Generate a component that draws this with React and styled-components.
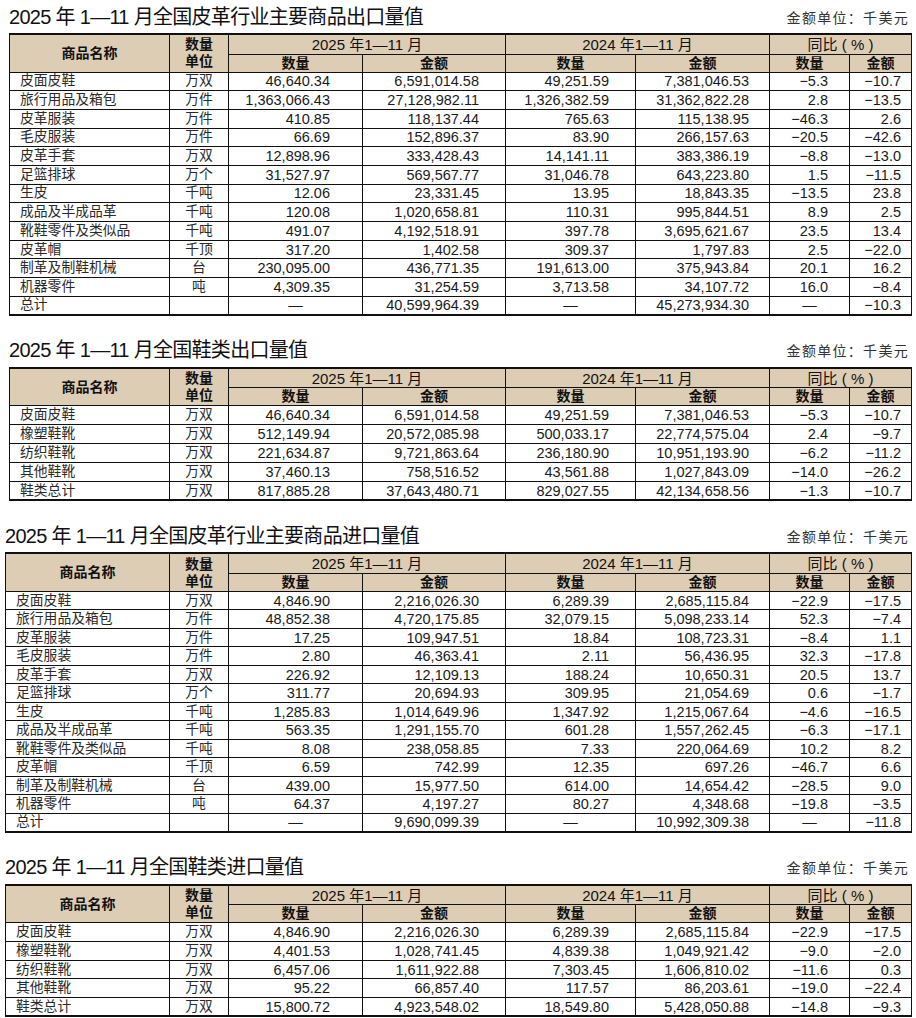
import React from "react";
import styled, { createGlobalStyle } from "styled-components";

const GlobalStyle = createGlobalStyle`
  html, body {
    margin: 0;
    padding: 0;
    background: #fff;
  }

  body {
    font-family: "Liberation Sans", "Noto Sans CJK SC", sans-serif;
    color: #1a1a1a;
  }
`

const Page = styled.div`
  width: 916px;
  display: flex;
  flex-direction: column;
  gap: 18px;
`

const Section = styled.section`
  display: flex;
  flex-direction: column;
  padding: 0 5px 0 ${({ $left }) => $left}px;
`

const TitleBar = styled.div`
  height: 33px;
  display: flex;
  align-items: center;
  justify-content: space-between;
`

const Title = styled.h2`
  margin: 0;
  font-size: 20px;
  font-weight: 400;
  line-height: 1;
  letter-spacing: -0.7px;
  color: #111;
`

const UnitNote = styled.span`
  font-family: "Noto Sans CJK SC", sans-serif;
  font-size: 14px;
  letter-spacing: 1.3px;
  color: #333;
  margin-right: 2px;
`

const Table = styled.table`
  width: 100%;
  table-layout: fixed;
  border-collapse: collapse;
  border-top: 2px solid #111;
  border-bottom: 2px solid #111;
`

const HeadRow = styled.tr`
  height: ${({ $h }) => $h}px;
`

const HeadCell = styled.th`
  background: #ddcdb4;
  border: 1px solid #111;
  padding: 0;
  text-align: center;
  font-size: ${({ $bold }) => ($bold ? 14 : 15)}px;
  font-weight: ${({ $bold }) => ($bold ? 700 : 400)};
  line-height: 17px;
  color: #111;
  white-space: nowrap;
`

const BodyRow = styled.tr`
  height: ${({ $h }) => $h}px;
`

const Cell = styled.td`
  border: 1px solid #111;
  padding: 0 ${({ $pr }) => $pr || 0}px 0 ${({ $pl }) => $pl || 0}px;
  text-align: ${({ $align }) => $align};
  font-size: ${({ $cjk }) => ($cjk ? 13.8 : 14.5)}px;
  line-height: 16px;
  color: ${({ $cjk }) => ($cjk ? "#2a2a2a" : "#1a1a1a")};
  white-space: nowrap;
`

// right padding of each number column, so figures end where the print has them
const numPad = [32, 26, 26, 20, 21, 10]

const exportGoods = [
  ["皮面皮鞋", "万双", "46,640.34", "6,591,014.58", "49,251.59", "7,381,046.53", "−5.3", "−10.7"],
  ["旅行用品及箱包", "万件", "1,363,066.43", "27,128,982.11", "1,326,382.59", "31,362,822.28", "2.8", "−13.5"],
  ["皮革服装", "万件", "410.85", "118,137.44", "765.63", "115,138.95", "−46.3", "2.6"],
  ["毛皮服装", "万件", "66.69", "152,896.37", "83.90", "266,157.63", "−20.5", "−42.6"],
  ["皮革手套", "万双", "12,898.96", "333,428.43", "14,141.11", "383,386.19", "−8.8", "−13.0"],
  ["足篮排球", "万个", "31,527.97", "569,567.77", "31,046.78", "643,223.80", "1.5", "−11.5"],
  ["生皮", "千吨", "12.06", "23,331.45", "13.95", "18,843.35", "−13.5", "23.8"],
  ["成品及半成品革", "千吨", "120.08", "1,020,658.81", "110.31", "995,844.51", "8.9", "2.5"],
  ["靴鞋零件及类似品", "千吨", "491.07", "4,192,518.91", "397.78", "3,695,621.67", "23.5", "13.4"],
  ["皮革帽", "千顶", "317.20", "1,402.58", "309.37", "1,797.83", "2.5", "−22.0"],
  ["制革及制鞋机械", "台", "230,095.00", "436,771.35", "191,613.00", "375,943.84", "20.1", "16.2"],
  ["机器零件", "吨", "4,309.35", "31,254.59", "3,713.58", "34,107.72", "16.0", "−8.4"],
  ["总计", "", "—", "40,599,964.39", "—", "45,273,934.30", "—", "−10.3"],
]

const exportShoes = [
  ["皮面皮鞋", "万双", "46,640.34", "6,591,014.58", "49,251.59", "7,381,046.53", "−5.3", "−10.7"],
  ["橡塑鞋靴", "万双", "512,149.94", "20,572,085.98", "500,033.17", "22,774,575.04", "2.4", "−9.7"],
  ["纺织鞋靴", "万双", "221,634.87", "9,721,863.64", "236,180.90", "10,951,193.90", "−6.2", "−11.2"],
  ["其他鞋靴", "万双", "37,460.13", "758,516.52", "43,561.88", "1,027,843.09", "−14.0", "−26.2"],
  ["鞋类总计", "万双", "817,885.28", "37,643,480.71", "829,027.55", "42,134,658.56", "−1.3", "−10.7"],
]

const importGoods = [
  ["皮面皮鞋", "万双", "4,846.90", "2,216,026.30", "6,289.39", "2,685,115.84", "−22.9", "−17.5"],
  ["旅行用品及箱包", "万件", "48,852.38", "4,720,175.85", "32,079.15", "5,098,233.14", "52.3", "−7.4"],
  ["皮革服装", "万件", "17.25", "109,947.51", "18.84", "108,723.31", "−8.4", "1.1"],
  ["毛皮服装", "万件", "2.80", "46,363.41", "2.11", "56,436.95", "32.3", "−17.8"],
  ["皮革手套", "万双", "226.92", "12,109.13", "188.24", "10,650.31", "20.5", "13.7"],
  ["足篮排球", "万个", "311.77", "20,694.93", "309.95", "21,054.69", "0.6", "−1.7"],
  ["生皮", "千吨", "1,285.83", "1,014,649.96", "1,347.92", "1,215,067.64", "−4.6", "−16.5"],
  ["成品及半成品革", "千吨", "563.35", "1,291,155.70", "601.28", "1,557,262.45", "−6.3", "−17.1"],
  ["靴鞋零件及类似品", "千吨", "8.08", "238,058.85", "7.33", "220,064.69", "10.2", "8.2"],
  ["皮革帽", "千顶", "6.59", "742.99", "12.35", "697.26", "−46.7", "6.6"],
  ["制革及制鞋机械", "台", "439.00", "15,977.50", "614.00", "14,654.42", "−28.5", "9.0"],
  ["机器零件", "吨", "64.37", "4,197.27", "80.27", "4,348.68", "−19.8", "−3.5"],
  ["总计", "", "—", "9,690,099.39", "—", "10,992,309.38", "—", "−11.8"],
]

const importShoes = [
  ["皮面皮鞋", "万双", "4,846.90", "2,216,026.30", "6,289.39", "2,685,115.84", "−22.9", "−17.5"],
  ["橡塑鞋靴", "万双", "4,401.53", "1,028,741.45", "4,839.38", "1,049,921.42", "−9.0", "−2.0"],
  ["纺织鞋靴", "万双", "6,457.06", "1,611,922.88", "7,303.45", "1,606,810.02", "−11.6", "0.3"],
  ["其他鞋靴", "万双", "95.22", "66,857.40", "117.57", "86,203.61", "−19.0", "−22.4"],
  ["鞋类总计", "万双", "15,800.72", "4,923,548.02", "18,549.80", "5,428,050.88", "−14.8", "−9.3"],
]

const tables = [
  { title: "2025 年 1—11 月全国皮革行业主要商品出口量值", rows: exportGoods, left: 9, rowH: 18.7 },
  { title: "2025 年 1—11 月全国鞋类出口量值", rows: exportShoes, left: 9, rowH: 18.9 },
  { title: "2025 年 1—11 月全国皮革行业主要商品进口量值", rows: importGoods, left: 5, rowH: 18.5 },
  { title: "2025 年 1—11 月全国鞋类进口量值", rows: importShoes, left: 5, rowH: 18.7 },
]

const TradeTable = ({ title, rows, left, rowH }) => (
  <Section $left={left}>
    <TitleBar>
      <Title>{title}</Title>
      <UnitNote>金额单位：千美元</UnitNote>
    </TitleBar>

    <Table>
      <colgroup>
        <col style={{ width: 169 - left }} />
        <col style={{ width: 59 }} />
        <col style={{ width: 134 }} />
        <col style={{ width: 143 }} />
        <col style={{ width: 130 }} />
        <col style={{ width: 134 }} />
        <col style={{ width: 80 }} />
        <col style={{ width: 62 }} />
      </colgroup>
      <thead>
        <HeadRow $h={20}>
          <HeadCell $bold rowSpan={2}>商品名称</HeadCell>
          <HeadCell $bold rowSpan={2}>数量<br />单位</HeadCell>
          <HeadCell colSpan={2}>2025 年1—11 月</HeadCell>
          <HeadCell colSpan={2}>2024 年1—11 月</HeadCell>
          <HeadCell colSpan={2}>同比 ( % )</HeadCell>
        </HeadRow>
        <HeadRow $h={18}>
          <HeadCell $bold>数量</HeadCell>
          <HeadCell $bold>金额</HeadCell>
          <HeadCell $bold>数量</HeadCell>
          <HeadCell $bold>金额</HeadCell>
          <HeadCell $bold>数量</HeadCell>
          <HeadCell $bold>金额</HeadCell>
        </HeadRow>
      </thead>
      <tbody>
        {rows.map(([name, unit, ...nums]) => (
          <BodyRow key={name} $h={rowH}>
            <Cell $cjk $align="left" $pl={10}>{name}</Cell>
            <Cell $cjk $align="center">{unit}</Cell>
            {nums.map((n, i) =>
              n === "—" ? (
                <Cell key={i} $align="center">{n}</Cell>
              ) : (
                <Cell key={i} $align="right" $pr={numPad[i]}>{n}</Cell>
              )
            )}
          </BodyRow>
        ))}
      </tbody>
    </Table>
  </Section>
)

const App = () => (
  <>
    <GlobalStyle />
    <Page>
      {tables.map((t) => (
        <TradeTable key={t.title} {...t} />
      ))}
    </Page>
  </>
)

export default App;
